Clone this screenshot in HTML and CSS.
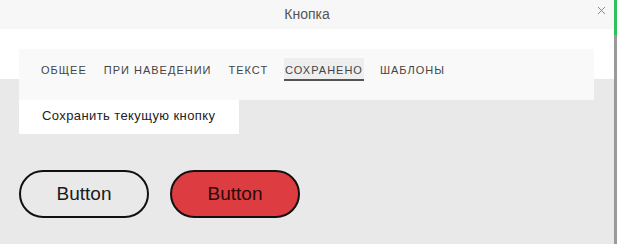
FILE: index.html
```html
<!DOCTYPE html>
<html lang="ru">
<head>
<meta charset="utf-8">
<title>Кнопка</title>
<link rel="stylesheet" href="styles.css">
</head>
<body>
<div class="window">
  <div class="main">
    <header class="header">
      <span></span>
      <h1 class="title">Кнопка</h1>
      <button class="close" aria-label="Закрыть">
        <svg width="9" height="9" viewBox="0 0 9 9"><path d="M1 1L8 8M8 1L1 8" stroke="#8a8a8a" stroke-width="1" fill="none"/></svg>
      </button>
    </header>
    <div class="content">
      <nav class="tabs">
        <span class="tab">ОБЩЕЕ</span>
        <span class="tab">ПРИ НАВЕДЕНИИ</span>
        <span class="tab">ТЕКСТ</span>
        <span class="tab active">СОХРАНЕНО</span>
        <span class="tab">ШАБЛОНЫ</span>
      </nav>
      <div class="dropdown">Сохранить текущую кнопку</div>
      <div class="buttons">
        <button class="btn">Button</button>
        <button class="btn red">Button</button>
      </div>
    </div>
  </div>
  <div class="strip">
    <div class="strip-top"></div>
    <div class="strip-rest"></div>
  </div>
</div>
</body>
</html>
```
FILE: styles.css
```css
html, body {
  margin: 0;
  padding: 0;
}
body {
  width: 617px;
  height: 244px;
  overflow: hidden;
  font-family: "Liberation Sans", Arial, sans-serif;
}
.window {
  display: flex;
  width: 617px;
  height: 244px;
}
.main {
  flex: 1;
  display: flex;
  flex-direction: column;
  min-width: 0;
}
.header {
  height: 29px;
  background: #f7f7f7;
  display: grid;
  grid-template-columns: 1fr auto 1fr;
  align-items: center;
}
.title {
  margin: 0;
  font-size: 14px;
  font-weight: normal;
  color: #555;
  line-height: 29px;
  padding-top: 0;
}
.close {
  justify-self: end;
  align-self: start;
  margin: 6px 8px 0 0;
  padding: 0;
  border: 0;
  background: none;
  width: 9px;
  height: 9px;
  display: flex;
}
.content {
  flex: 1;
  background: linear-gradient(#ffffff 0, #ffffff 50px, #e9e9e9 50px);
  padding: 20px 20px 0 19px;
}
.tabs {
  height: 51px;
  box-sizing: border-box;
  background: #f9f9f9;
  padding: 9px 21px 0;
  display: flex;
  gap: 15px;
  align-items: flex-start;
}
.tab {
  font-size: 11px;
  letter-spacing: 1px;
  color: #444;
  padding: 4px 1px 0;
  line-height: 17px;
  border-bottom: 2px solid transparent;
}
.tab.active {
  background: #eeeeee;
  border-bottom-color: #555;
}
.dropdown {
  width: 220px;
  height: 34px;
  box-sizing: border-box;
  background: #fff;
  padding-left: 23px;
  font-size: 13px;
  letter-spacing: 0.4px;
  line-height: 32px;
  color: #222;
}
.buttons {
  margin-top: 36px;
  display: flex;
  gap: 21px;
}
.btn {
  width: 130px;
  height: 48px;
  box-sizing: border-box;
  border: 2px solid #111;
  border-radius: 24px;
  background: transparent;
  font-family: "Liberation Sans", Arial, sans-serif;
  font-size: 19px;
  color: #1a1a1a;
  padding: 0;
}
.btn.red {
  background: #dd3d40;
  color: #2a0a0a;
}
.strip {
  width: 3px;
  display: flex;
  flex-direction: column;
}
.strip-top {
  height: 35px;
  background: #2fc15a;
}
.strip-rest {
  flex: 1;
  background: #9a9a9a;
}
```
